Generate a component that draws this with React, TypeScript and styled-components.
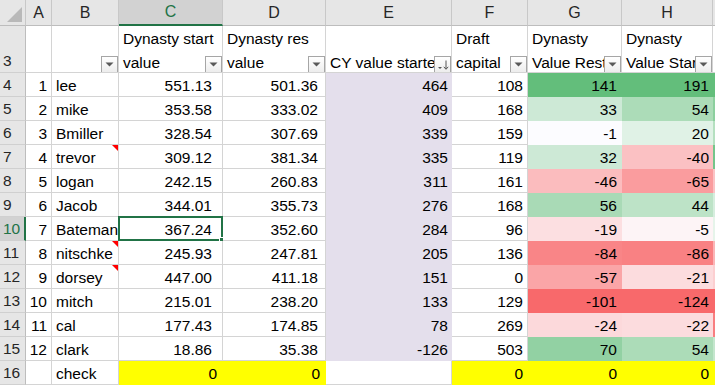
import React from "react";
import styled, { createGlobalStyle, css } from "styled-components";

const GREEN = "#217346";
const GRID = "#d4d4d4";
const LAVENDER = "#e4dfec";
const YELLOW = "#ffff00";

const GlobalStyle = createGlobalStyle`
  html, body {
    margin: 0;
    padding: 0;
    background: #ffffff;
    overflow: hidden;
  }
  body {
    font-family: "Liberation Sans", Arial, sans-serif;
  }
`;

interface Player {
  n: number;
  name: string;
  start: string;
  res: string;
  cy: number;
  draft: number;
  g: number;
  h: number;
  gBg: string;
  hBg: string;
  iBg: string;
  comment?: boolean;
}

const players: Player[] = [
  { n: 1, name: "lee", start: "551.13", res: "501.36", cy: 464, draft: 108, g: 141, h: 191, gBg: "#63be7b", hBg: "#63be7b", iBg: "#63be7b" },
  { n: 2, name: "mike", start: "353.58", res: "333.02", cy: 409, draft: 168, g: 33, h: 54, gBg: "#cde9d6", hBg: "#acdcb8", iBg: "#8ccf9e" },
  { n: 3, name: "Bmiller", start: "328.54", res: "307.69", cy: 339, draft: 159, g: -1, h: 20, gBg: "#fcfcff", hBg: "#e0f2e6", iBg: "#b5e0c0" },
  { n: 4, name: "trevor", start: "309.12", res: "381.34", cy: 335, draft: 119, g: 32, h: -40, gBg: "#cde9d6", hBg: "#fbc1c3", iBg: "#74c58a", comment: true },
  { n: 5, name: "logan", start: "242.15", res: "260.83", cy: 311, draft: 161, g: -46, h: -65, gBg: "#fbbcbe", hBg: "#fa9c9e", iBg: "#fbc3c5" },
  { n: 6, name: "Jacob", start: "344.01", res: "355.73", cy: 276, draft: 168, g: 56, h: 44, gBg: "#a9dab6", hBg: "#bde3c7", iBg: "#d6eede" },
  { n: 7, name: "Bateman", start: "367.24", res: "352.60", cy: 284, draft: 96, g: -19, h: -5, gBg: "#fcdfe1", hBg: "#fdf4f6", iBg: "#e6f4ea" },
  { n: 8, name: "nitschke", start: "245.93", res: "247.81", cy: 205, draft: 136, g: -84, h: -86, gBg: "#f98587", hBg: "#f98183", iBg: "#fbb5b7", comment: true },
  { n: 9, name: "dorsey", start: "447.00", res: "411.18", cy: 151, draft: 0, g: -57, h: -21, gBg: "#faa5a7", hBg: "#fcdcde", iBg: "#fccfd1", comment: true },
  { n: 10, name: "mitch", start: "215.01", res: "238.20", cy: 133, draft: 129, g: -101, h: -124, gBg: "#f8696b", hBg: "#f8696b", iBg: "#f8696b" },
  { n: 11, name: "cal", start: "177.43", res: "174.85", cy: 78, draft: 269, g: -24, h: -22, gBg: "#fcd9db", hBg: "#fcdcde", iBg: "#f87e80" },
  { n: 12, name: "clark", start: "18.86", res: "35.38", cy: -126, draft: 503, g: 70, h: 54, gBg: "#92d1a3", hBg: "#acdcb8", iBg: "#c4e6cd" },
];

// column I is only a sliver at the right edge, so its letter is not shown
const columns = ["A", "B", "C", "D", "E", "F", "G", "H", ""];
const ACTIVE_COL = "C";
const ACTIVE_ROW = 10;

const App = () => {
  return (
    <>
      <GlobalStyle />
      <Sheet>
        <Corner>
          <CornerTriangle />
        </Corner>
        {columns.map((c, i) => (
          <ColHeader key={i} $active={c === ACTIVE_COL}>
            {c}
          </ColHeader>
        ))}

        <RowHeader $active={false}>3</RowHeader>
        <HeadCell />
        <HeadCell>
          <FilterButton />
        </HeadCell>
        <HeadCell>
          <HeadText>Dynasty start value</HeadText>
          <FilterButton />
        </HeadCell>
        <HeadCell>
          <HeadText>Dynasty res value</HeadText>
          <FilterButton />
        </HeadCell>
        <HeadCell>
          <HeadText $nowrap>CY value started</HeadText>
          <FilterButton sorted />
        </HeadCell>
        <HeadCell>
          <HeadText>Draft capital</HeadText>
          <FilterButton />
        </HeadCell>
        <HeadCell>
          <HeadText $nowrap>
            Dynasty
            <br />
            Value Rest
          </HeadText>
          <FilterButton />
        </HeadCell>
        <HeadCell>
          <HeadText $nowrap>
            Dynasty
            <br />
            Value Start
          </HeadText>
          <FilterButton />
        </HeadCell>
        <HeadCell />

        {players.map((p, i) => {
          const row = i + 4;
          return (
            <React.Fragment key={p.name}>
              <RowHeader $active={row === ACTIVE_ROW}>{row}</RowHeader>
              <Cell $align="right" $pad={4}>
                {p.n}
              </Cell>
              <Cell $pad={4}>
                {p.name}
                {p.comment && <CommentMark />}
              </Cell>
              <Cell $align="right" $pad={10}>
                {p.start}
                {row === ACTIVE_ROW && (
                  <Selection>
                    <FillHandle />
                  </Selection>
                )}
              </Cell>
              <Cell $align="right" $pad={7}>
                {p.res}
              </Cell>
              <Cell $align="right" $pad={3} $bg={LAVENDER}>
                {p.cy}
              </Cell>
              <Cell $align="right" $pad={4}>
                {p.draft}
              </Cell>
              <Cell $align="right" $pad={4} $bg={p.gBg}>
                {p.g}
              </Cell>
              <Cell $align="right" $pad={3} $bg={p.hBg}>
                {p.h}
              </Cell>
              <Cell $bg={p.iBg} />
            </React.Fragment>
          );
        })}

        <RowHeader $active={false}>16</RowHeader>
        <Cell />
        <Cell $pad={4}>check</Cell>
        <Cell $align="right" $pad={5} $bg={YELLOW}>
          0
        </Cell>
        <Cell $align="right" $pad={5} $bg={YELLOW}>
          0
        </Cell>
        <Cell />
        <Cell $align="right" $pad={4} $bg={YELLOW}>
          0
        </Cell>
        <Cell $align="right" $pad={4} $bg={YELLOW}>
          0
        </Cell>
        <Cell $align="right" $pad={3} $bg={YELLOW}>
          0
        </Cell>
        <Cell $bg={YELLOW} />
      </Sheet>
    </>
  );
};

export default App;

const FilterButton = ({ sorted }: { sorted?: boolean }) => (
  <FilterBox>
    {sorted ? (
      <svg width="14" height="12" viewBox="0 0 14 12">
        <path d="M2 8 L6 8 L4 10 Z" fill="#555" />
        <path d="M10 1.5 V10" stroke="#555" strokeWidth="1" />
        <path d="M7.8 7.8 L10 10.3 L12.2 7.8" stroke="#555" strokeWidth="1" fill="none" />
      </svg>
    ) : (
      <svg width="9" height="5" viewBox="0 0 9 5">
        <path d="M0.5 0.5 L8.5 0.5 L4.5 4.5 Z" fill="#595959" />
      </svg>
    )}
  </FilterBox>
);

const Sheet = styled.div`
  display: grid;
  grid-template-columns: 26px 26px 67px 104px 103px 126px 76px 94px 91px 20px;
  grid-template-rows: 26px 47px repeat(13, 24px);
  width: 733px;
  color: #000;
  font-size: 15.5px;
`;

const Corner = styled.div`
  position: relative;
  background: #e6e6e6;
  border-right: 1px solid #c8c8c8;
  border-bottom: 1px solid #bdbdbd;
`;

const CornerTriangle = styled.div`
  position: absolute;
  right: 3px;
  bottom: 3px;
  width: 0;
  height: 0;
  border-left: 15px solid transparent;
  border-bottom: 15px solid #b9b9b9;
`;

const ColHeader = styled.div<{ $active: boolean }>`
  display: flex;
  align-items: center;
  justify-content: center;
  background: #e6e6e6;
  color: #262626;
  font-size: 16px;
  border-right: 1px solid #c8c8c8;
  border-bottom: 1px solid #bdbdbd;
  ${(p) =>
    p.$active &&
    css`
      background: #d2d2d2;
      color: ${GREEN};
      border-bottom: 2px solid ${GREEN};
    `}
`;

const RowHeader = styled.div<{ $active: boolean }>`
  display: flex;
  align-items: flex-end;
  padding-left: 3px;
  padding-bottom: 1px;
  line-height: 20px;
  background: #e6e6e6;
  color: #262626;
  font-size: 15.5px;
  border-right: 1px solid #bdbdbd;
  border-bottom: 1px solid #d0d0d0;
  ${(p) =>
    p.$active &&
    css`
      background: #d2d2d2;
      color: ${GREEN};
      border-right: 2px solid ${GREEN};
    `}
`;

const HeadCell = styled.div`
  position: relative;
  display: flex;
  align-items: flex-end;
  padding: 0 3px 0 4px;
  overflow: hidden;
  border-right: 1px solid ${GRID};
  border-bottom: 1px solid ${GRID};
`;

const HeadText = styled.div<{ $nowrap?: boolean }>`
  line-height: 24px;
  margin-bottom: -3px;
  white-space: ${(p) => (p.$nowrap ? "nowrap" : "normal")};
`;

const FilterBox = styled.div`
  position: absolute;
  right: 0;
  bottom: -1px;
  width: 17px;
  height: 17px;
  box-sizing: border-box;
  display: flex;
  align-items: center;
  justify-content: center;
  background: linear-gradient(#ffffff, #ededed);
  border: 1px solid #a6a6a6;
`;

const Cell = styled.div<{ $align?: "left" | "right"; $pad?: number; $bg?: string }>`
  position: relative;
  display: flex;
  align-items: flex-end;
  justify-content: ${(p) => (p.$align === "right" ? "flex-end" : "flex-start")};
  padding: 0 ${(p) => (p.$align === "right" ? p.$pad ?? 3 : 3)}px 0
    ${(p) => (p.$align === "right" ? 3 : p.$pad ?? 3)}px;
  line-height: 20px;
  white-space: nowrap;
  overflow: ${(p) => (p.$align === "right" ? "visible" : "hidden")};
  background: ${(p) => p.$bg ?? "#ffffff"};
  border-right: 1px solid ${(p) => p.$bg ?? GRID};
  border-bottom: 1px solid ${(p) => p.$bg ?? GRID};
`;

const CommentMark = styled.span`
  position: absolute;
  top: 0;
  right: 0;
  width: 0;
  height: 0;
  border-left: 6px solid transparent;
  border-top: 6px solid #ff0000;
`;

const Selection = styled.div`
  position: absolute;
  left: -1px;
  top: -1px;
  right: -1px;
  bottom: -1px;
  border: 2px solid ${GREEN};
  pointer-events: none;
`;

const FillHandle = styled.div`
  position: absolute;
  right: -5px;
  bottom: -5px;
  width: 5px;
  height: 5px;
  background: ${GREEN};
  border: 1px solid #ffffff;
`;
